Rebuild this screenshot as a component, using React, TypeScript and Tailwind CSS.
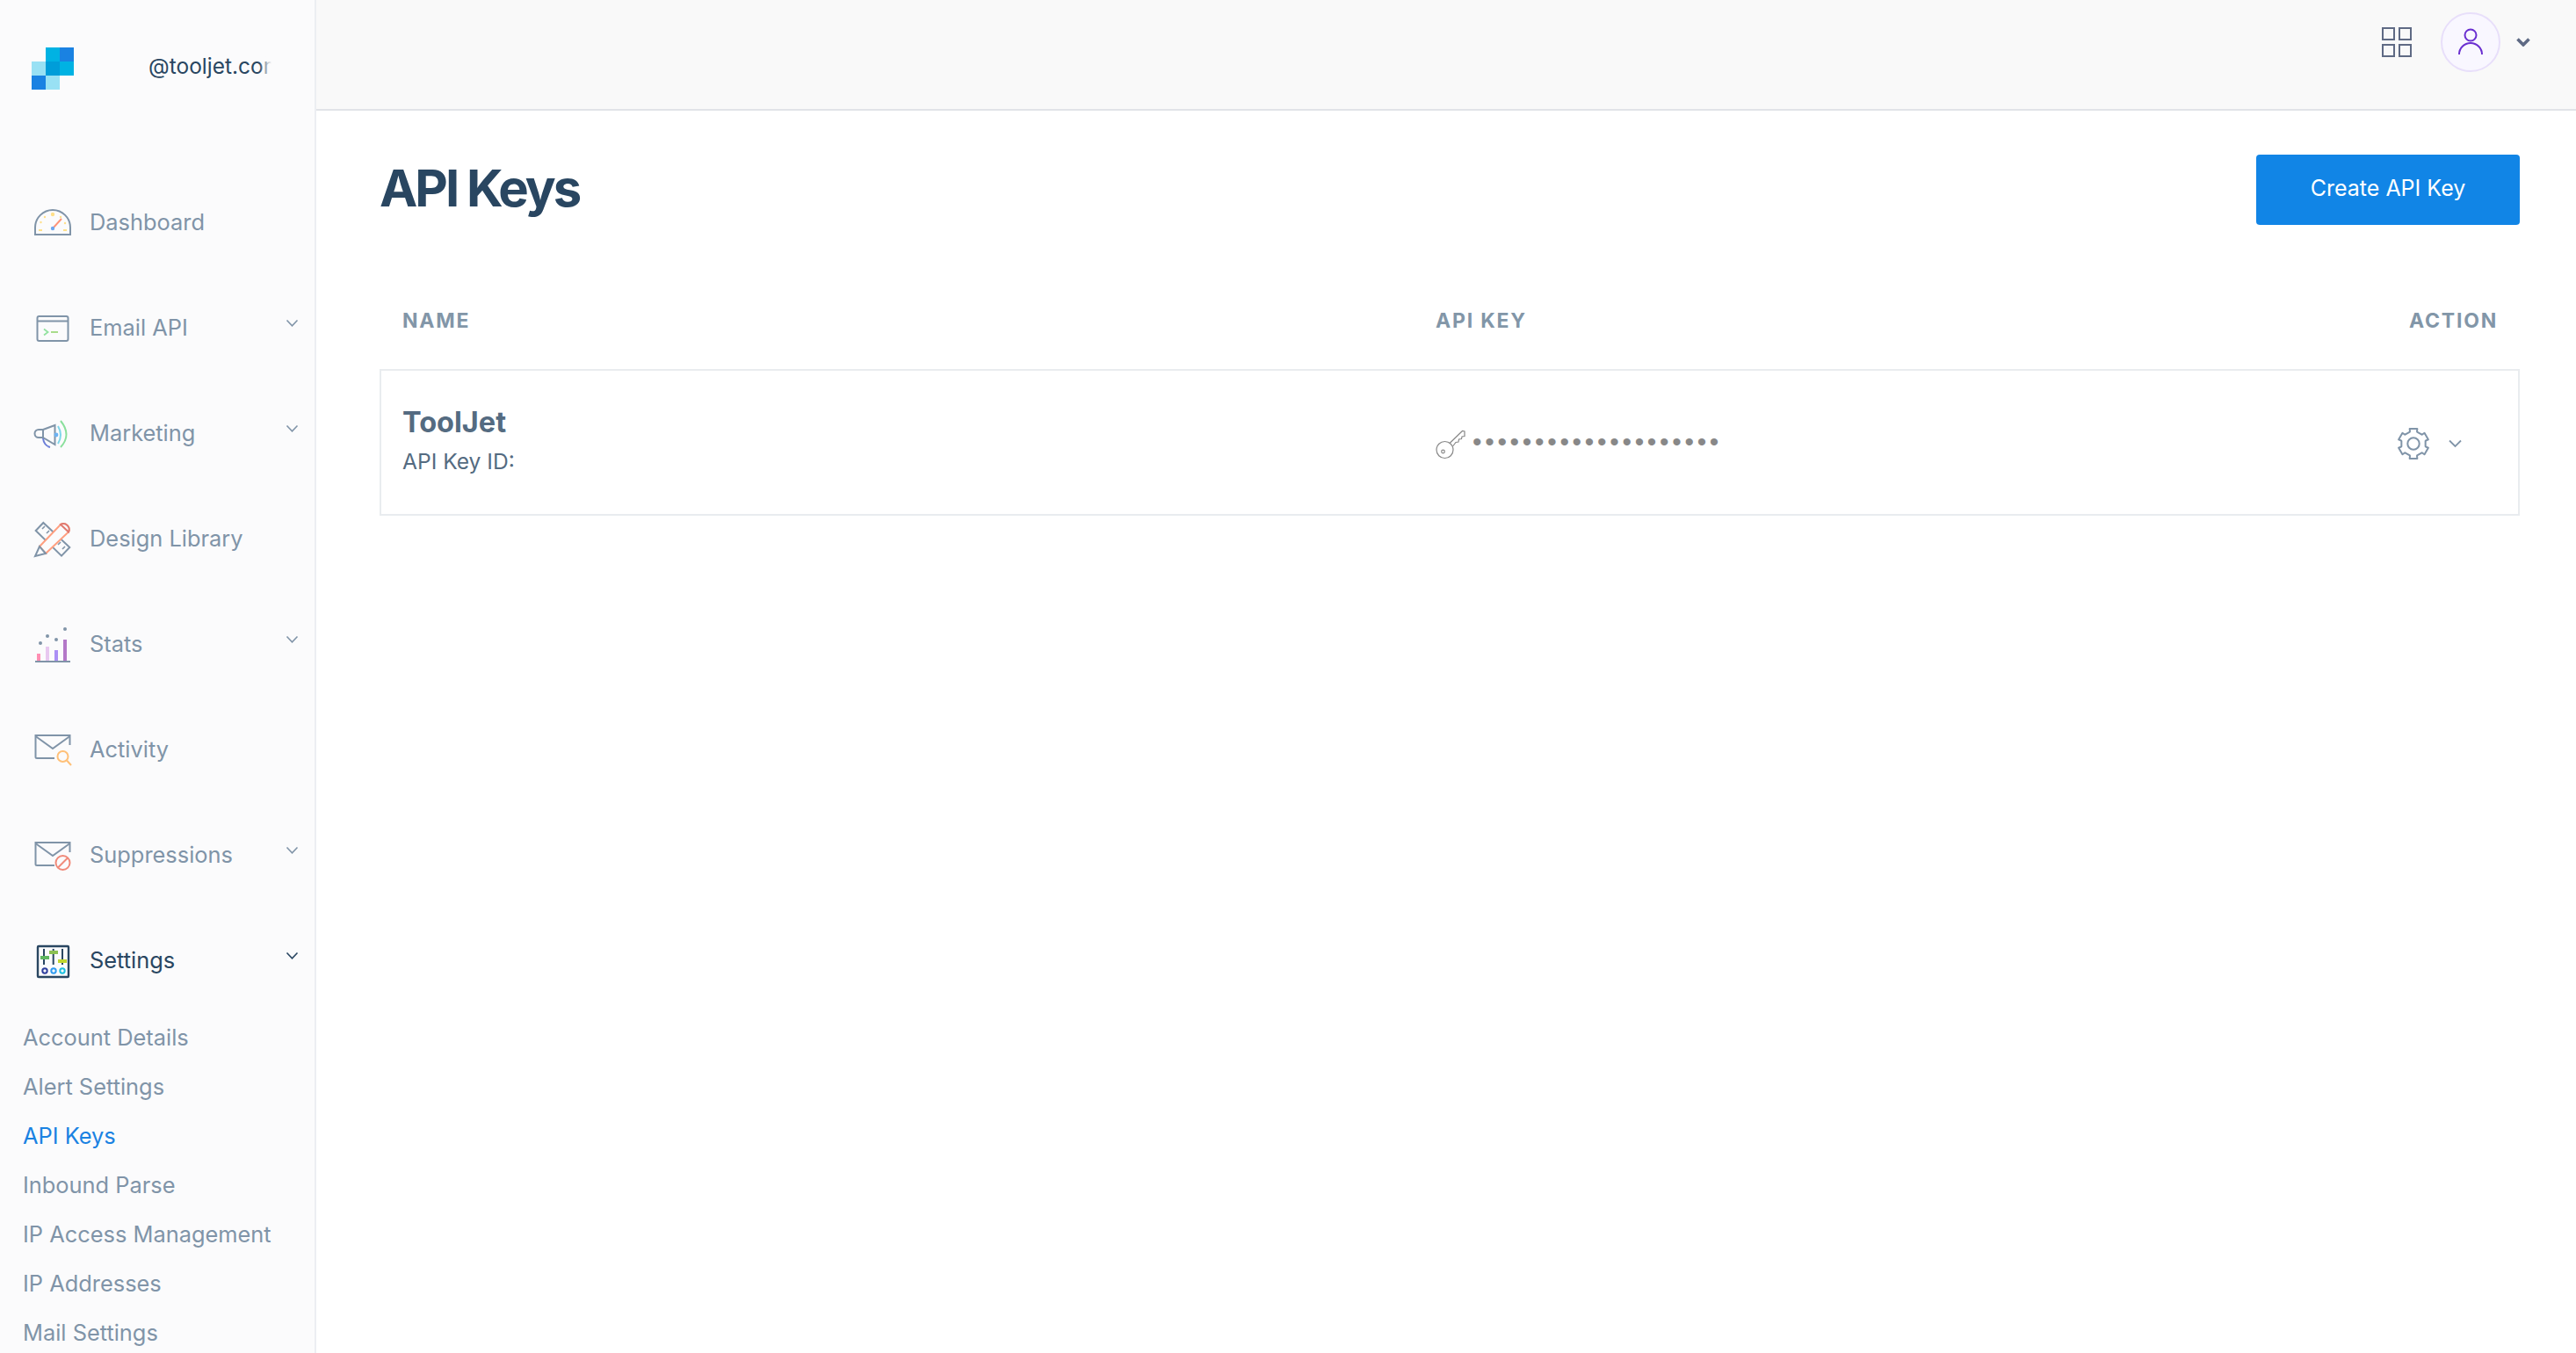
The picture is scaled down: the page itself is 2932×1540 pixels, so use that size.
import React from "react";

const SLATE = "#8094a8";

function Chevron({ dark }: { dark?: boolean }) {
  return (
    <svg width="15" height="10" viewBox="0 0 15 10" fill="none" className="mb-2 shrink-0">
      <path d="M1.5 1.5 L7.5 7.8 L13.5 1.5" stroke={dark ? "#294661" : SLATE} strokeWidth="1.6" />
    </svg>
  );
}

const gearPath = (() => {
  const teeth = 6;
  const pts: string[] = [];
  const step = (Math.PI * 2) / teeth;
  for (let i = 0; i < teeth; i++) {
    const a = -Math.PI / 2 + i * step;
    const seq: [number, number][] = [
      [14, -0.3],
      [14.5, -0.28],
      [17.5, -0.25],
      [17.5, 0.25],
      [14.5, 0.28],
      [14, 0.3],
    ];
    seq.forEach(([r, o]) => {
      const x = 20 + r * Math.cos(a + o);
      const y = 20 + r * Math.sin(a + o);
      pts.push(`${pts.length ? "L" : "M"}${x.toFixed(2)} ${y.toFixed(2)}`);
    });
  }
  return pts.join(" ") + " Z";
})();

const Svg = ({ children }: { children: React.ReactNode }) => (
  <svg width="48" height="48" viewBox="0 0 48 48" fill="none" className="shrink-0">
    {children}
  </svg>
);

const icons: Record<string, React.ReactNode> = {
  Dashboard: (
    <Svg>
      <path d="M4 39 H44 V31 A20 20 0 0 0 4 31 Z" stroke={SLATE} strokeWidth="2" />
      <g fill="#ffe08a">
        <circle cx="24" cy="16" r="2.2" />
        <circle cx="15" cy="19" r="1.2" />
        <circle cx="10.5" cy="25" r="1.2" />
        <circle cx="33" cy="19" r="1.2" />
        <circle cx="38" cy="26" r="1.2" />
        <rect x="8" y="33" width="4" height="2" />
        <rect x="36" y="33" width="4" height="2" />
      </g>
      <path d="M24 32 L34 21" stroke="#ff9478" strokeWidth="2" />
      <circle cx="24" cy="32" r="2.2" fill="#6ea8ef" />
    </Svg>
  ),
  "Email API": (
    <Svg>
      <rect x="6.5" y="12" width="35" height="28" rx="2" stroke={SLATE} strokeWidth="2" />
      <path d="M6.5 17.5 H41.5" stroke={SLATE} strokeWidth="2" />
      <path d="M14 26.5 L18.5 30 L14 33.5" stroke="#93e2a0" strokeWidth="1.8" />
      <path d="M22 30 H30" stroke="#a8dc8a" strokeWidth="2" />
    </Svg>
  ),
  Marketing: (
    <Svg>
      <path d="M13 21 H8 a4 4 0 0 0 0 9 H13 Z" stroke={SLATE} strokeWidth="2" />
      <path d="M13 21 L26.5 16 V38 L13 30 Z" stroke={SLATE} strokeWidth="2" />
      <path d="M13 31 Q14 39 21 41" stroke="#6c7fd8" strokeWidth="2" />
      <circle cx="28" cy="27" r="2.4" fill="#6db3f2" />
      <path d="M30 17 Q36 27 30 37" stroke="#7fd6ea" strokeWidth="2" />
      <path d="M33 11 Q46 27 33 41" stroke="#8adf9c" strokeWidth="2" />
    </Svg>
  ),
  "Design Library": (
    <Svg>
      <path d="M4.7 16 L13.3 7 L43.3 35 L34 44.7 Z" stroke={SLATE} strokeWidth="2" fill="#fbfbfc" />
      <path d="M12 14 L15 11 M17 19 L20 16 M30 32 L33 29 M35 37 L38 34" stroke={SLATE} strokeWidth="1.6" />
      <path d="M9 34 L33 9 A6.5 6.5 0 0 1 42 17.5 L16 42 Z" stroke="#ff9f80" strokeWidth="2" fill="#fbfbfc" />
      <path d="M33 9 A6.5 6.5 0 0 1 42 17.5 Z" stroke="#e07a70" strokeWidth="2" fill="#fbfbfc" />
      <path d="M9 34 L4 45 L16 42 Z" stroke={SLATE} strokeWidth="2" fill="#fbfbfc" />
    </Svg>
  ),
  Stats: (
    <Svg>
      <rect x="6" y="36" width="4" height="8" fill="#ff8fb3" />
      <rect x="16" y="28" width="4" height="16" fill="#e8c8f0" />
      <rect x="26" y="32" width="4" height="12" fill="#ab8ff5" />
      <rect x="36" y="20" width="4" height="24" fill="#b478c8" />
      <rect x="4" y="44" width="40" height="2" fill={SLATE} />
      <g fill={SLATE}>
        <circle cx="10" cy="24" r="2" />
        <circle cx="18" cy="16" r="2" />
        <circle cx="28" cy="20" r="2" />
        <circle cx="38" cy="8" r="2" />
      </g>
    </Svg>
  ),
  Activity: (
    <Svg>
      <path d="M26 35 H6 a1.5 1.5 0 0 1 -1.5 -1.5 V9 H43.5 V20" stroke={SLATE} strokeWidth="2" />
      <path d="M4.5 10 L24 24 L43.5 10" stroke={SLATE} strokeWidth="2" />
      <circle cx="35.5" cy="33" r="6" stroke="#ffc078" strokeWidth="2" fill="#fbfbfc" />
      <path d="M40 37.5 L45 43" stroke="#ffc078" strokeWidth="2" />
    </Svg>
  ),
  Suppressions: (
    <Svg>
      <path d="M26 37 H6 a1.5 1.5 0 0 1 -1.5 -1.5 V11 H43.5 V22" stroke={SLATE} strokeWidth="2" />
      <path d="M4.5 12 L24 26 L43.5 12" stroke={SLATE} strokeWidth="2" />
      <circle cx="35.5" cy="34" r="8" stroke="#f08a7a" strokeWidth="2" fill="#fbfbfc" />
      <path d="M30 39.5 L41 28.5" stroke="#f08a7a" strokeWidth="2" />
    </Svg>
  ),
  Settings: (
    <Svg>
      <rect x="7" y="9" width="35" height="35" rx="1" stroke="#294661" strokeWidth="2.4" />
      <path d="M14 12 V30 M24.7 12 V30 M35 12 V30" stroke="#294661" strokeWidth="2" />
      <rect x="10" y="20" width="10" height="4" fill="#5fb760" />
      <rect x="20" y="14" width="10" height="4" fill="#8cc152" />
      <rect x="30" y="24" width="10" height="4" fill="#c0d72f" />
      <circle cx="15" cy="37" r="2.7" stroke="#2f3f9e" strokeWidth="2" />
      <circle cx="25" cy="37" r="2.7" stroke="#2f9bf0" strokeWidth="2" />
      <circle cx="35" cy="37" r="2.7" stroke="#1cc0e0" strokeWidth="2" />
    </Svg>
  ),
};

const nav: { label: string; chevron?: boolean }[] = [
  { label: "Dashboard" },
  { label: "Email API", chevron: true },
  { label: "Marketing", chevron: true },
  { label: "Design Library" },
  { label: "Stats", chevron: true },
  { label: "Activity" },
  { label: "Suppressions", chevron: true },
  { label: "Settings", chevron: true },
];

const subs = [
  "Account Details",
  "Alert Settings",
  "API Keys",
  "Inbound Parse",
  "IP Access Management",
  "IP Addresses",
  "Mail Settings",
];

export default function App() {
  return (
    <div className="flex h-[1540px] w-[2932px] overflow-hidden bg-white font-['Inter',sans-serif]">
      <aside className="h-full w-[360px] shrink-0 overflow-hidden border-r-2 border-[#eceef2] bg-[#fbfbfc]">
        <div className="flex h-[192px] items-start pl-[36px] pt-[54px]">
          <svg width="48" height="48" viewBox="0 0 48 48" className="shrink-0">
            <rect x="16" y="0" width="16" height="16" fill="#00b2e3" />
            <rect x="32" y="0" width="16" height="16" fill="#1a82e2" />
            <rect x="0" y="16" width="16" height="16" fill="#99e1f4" />
            <rect x="16" y="16" width="16" height="16" fill="#009dd9" />
            <rect x="32" y="16" width="16" height="16" fill="#00b2e3" />
            <rect x="0" y="32" width="16" height="16" fill="#1a82e2" />
            <rect x="16" y="32" width="16" height="16" fill="#99e1f4" />
          </svg>
          <div className="relative ml-[85px] mt-[4px] w-[140px] overflow-hidden whitespace-nowrap text-[24.5px] leading-[34px] text-[#294661]">
            @tooljet.com
            <div className="absolute inset-y-0 right-0 w-[14px] bg-linear-to-r from-transparent to-[#fbfbfc]" />
          </div>
        </div>
        <nav>
          {nav.map((n) => (
            <div key={n.label} className="flex h-[120px] items-center pl-[36px] pr-[18px]">
              {icons[n.label]}
              <span
                className={`ml-[18px] flex-1 pt-[2px] text-[25.4px] leading-[36px] ${
                  n.label === "Settings" ? "text-[#294661]" : "text-[#8094a8]"
                }`}
              >
                {n.label}
              </span>
              {n.chevron && <Chevron dark={n.label === "Settings"} />}
            </div>
          ))}
        </nav>
        <div>
          {subs.map((s) => (
            <div
              key={s}
              className={`flex h-[56px] items-center pl-[26px] pt-[3px] text-[25.4px] ${
                s === "API Keys" ? "text-[#1a82e2]" : "text-[#8094a8]"
              }`}
            >
              {s}
            </div>
          ))}
        </div>
      </aside>

      <div className="flex min-w-0 flex-1 flex-col">
        <header className="flex h-[126px] items-center justify-end border-b-2 border-[#e1e3e8] bg-[#f9f9f9] pb-[28px] pr-[52px]">
          <div className="grid grid-cols-2 gap-[4px]">
            <div className="h-[15px] w-[15px] border-[2.5px] border-[#5f6a84]" />
            <div className="h-[15px] w-[15px] border-[2.5px] border-[#5f6a84]" />
            <div className="h-[15px] w-[15px] border-[2.5px] border-[#5f6a84]" />
            <div className="h-[15px] w-[15px] border-[2.5px] border-[#5f6a84]" />
          </div>
          <div className="ml-[33px] flex h-[68px] w-[68px] items-center justify-center rounded-full border-2 border-[#e8dffa] bg-[#f9f7ff]">
            <svg width="64" height="64" viewBox="0 0 64 64" fill="none">
              <circle cx="32" cy="24" r="6.5" stroke="#6a2fd0" strokeWidth="2" />
              <path d="M19 46 A13 13 0 0 1 45 46" stroke="#6a2fd0" strokeWidth="2" />
            </svg>
          </div>
          <svg width="16" height="10" viewBox="0 0 16 10" fill="none" className="ml-[18px]">
            <path d="M1.5 1.5 L8 8 L14.5 1.5" stroke="#5f6a84" strokeWidth="3.6" />
          </svg>
        </header>

        <main className="pl-[72px] pr-[64px] pt-[50px]">
          <div className="flex items-center justify-between">
            <h1 className="mb-[3px] text-[58px] font-bold leading-[77px] tracking-[-3px] text-[#294661]">API Keys</h1>
            <button className="flex h-[80px] w-[300px] items-center justify-center rounded-[4px] bg-[#1185e6] pb-[2px] text-[25px] text-white">
              Create API Key
            </button>
          </div>

          <div className="flex pb-[41px] pt-[95px] text-[23px] font-bold leading-[28px] tracking-[1.8px] text-[#8296a8]">
            <div className="w-[1202px] pl-[26px]">NAME</div>
            <div className="flex-1">API KEY</div>
            <div className="pr-[25px]">ACTION</div>
          </div>

          <div className="flex h-[167px] items-center border-2 border-[#e9ecef]">
            <div className="w-[1200px] pb-[3px] pl-[24px]">
              <div className="text-[32.5px] font-bold leading-[44px] text-[#546b81]">ToolJet</div>
              <div className="mt-[2px] text-[24.6px] leading-[40px] text-[#546b81]">API Key ID:</div>
            </div>
            <div className="flex flex-1 items-center">
              <svg width="36" height="36" viewBox="0 0 36 36" fill="none" className="-ml-[1px] mt-[4px]">
                <circle cx="11.5" cy="24" r="9.5" stroke="#888" strokeWidth="1.2" />
                <circle cx="9.5" cy="26" r="1.8" stroke="#888" strokeWidth="1.2" />
                <path
                  d="M17 16.5 L31.5 2.5 L34 3 L34 8.5 L31 9 L30.5 11.5 L27.5 12 L27 15 L24 15.5 L20.5 20"
                  stroke="#888"
                  strokeWidth="1.2"
                />
              </svg>
              <span className="mb-[2px] ml-[7px] font-['Liberation_Sans',sans-serif] text-[30px] leading-[36px] tracking-[3.7px] text-[#888]">
                ••••••••••••••••••••
              </span>
            </div>
            <div className="flex items-center pr-[64px] pt-[2px]">
              <svg width="40" height="40" viewBox="0 0 40 40" fill="none">
                <path d={gearPath} stroke={SLATE} strokeWidth="2" strokeLinejoin="round" />
                <circle cx="20" cy="20" r="6.7" stroke={SLATE} strokeWidth="2" />
              </svg>
              <svg width="15" height="10" viewBox="0 0 15 10" fill="none" className="ml-[20px]">
                <path d="M1 1.5 L7.5 8 L14 1.5" stroke={SLATE} strokeWidth="1.8" />
              </svg>
            </div>
          </div>
        </main>
      </div>
    </div>
  );
}
